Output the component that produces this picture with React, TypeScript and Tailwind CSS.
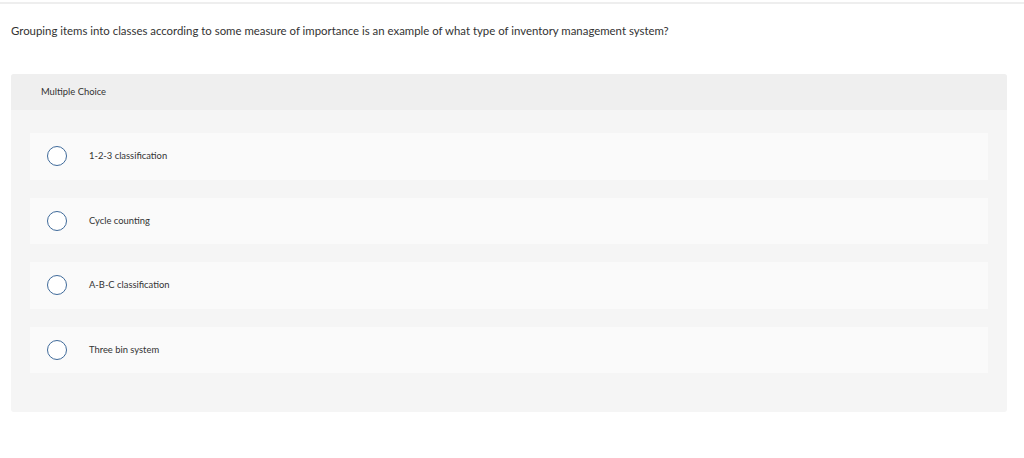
const options = [
  "1-2-3 classification",
  "Cycle counting",
  "A-B-C classification",
  "Three bin system",
];

export default function App() {
  return (
    <div className="w-[1024px] h-[458px] bg-white font-['Lato',sans-serif] text-[#333]">
      <div className="h-[2px]" />
      <div className="h-[2px] bg-[#eeeeee]" />

      {/* Question */}
      <div className="px-[11px] pt-[20px] text-[11.4px] leading-[14px]">
        Grouping items into classes according to some measure of importance is an example of what type of inventory management system?
      </div>

      {/* Answer panel */}
      <div className="mt-[36px] ml-[11px] w-[996px] rounded-[3px] bg-[#f5f5f5] overflow-hidden">
        <div className="h-[36px] bg-[#efefef] pl-[30px] flex items-center text-[9.4px]">
          Multiple Choice
        </div>
        <div className="px-[19px] pt-[23px] pb-[39px] flex flex-col gap-[18px]">
          {options.map((o) => (
            <div key={o} className="h-[46.5px] bg-[#fafafa] flex items-center">
              <div className="ml-[17px] w-[20px] h-[20px] rounded-full border border-[#3f6a9a] bg-white" />
              <span className="ml-[22px] text-[9.4px]">{o}</span>
            </div>
          ))}
        </div>
      </div>
    </div>
  );
}
